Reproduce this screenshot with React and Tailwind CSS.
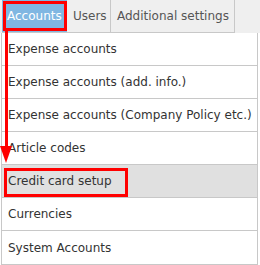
export default function App() {
  const items = [
    "Expense accounts",
    "Expense accounts (add. info.)",
    "Expense accounts (Company Policy etc.)",
    "Article codes",
    "Credit card setup",
    "Currencies",
    "System Accounts",
  ];
  return (
    <div className="relative w-[260px] h-[265px] bg-white overflow-hidden font-['DejaVu_Sans',sans-serif] text-[12px] leading-none">
      <div className="flex h-[33px] bg-[#efefef] pl-[2px]">
        <div className="w-[65px] h-[33px] bg-[#80b7e2] text-white flex items-center pl-[5px] border-b border-[#c8c8c8]">
          Accounts
        </div>
        <div className="w-[44px] h-[33px] text-[#555] flex items-center pl-[6px] border-r border-b border-[#c8c8c8]">
          Users
        </div>
        <div className="w-[124px] h-[33px] text-[#555] flex items-center pl-[6px] border-r border-b border-[#c8c8c8]">
          Additional settings
        </div>
      </div>
      <div className="ml-[1px] w-[257px] border-x border-b border-[#c8c8c8] bg-white">
        {items.map((t, i) => (
          <div
            key={t}
            className={
              "h-[33px] flex items-center pl-[6px] text-[#333] " +
              (i < items.length - 1 ? "border-b border-[#c8c8c8] " : "") +
              (t === "Credit card setup" ? "bg-[#e0e0e0]" : "bg-white")
            }
          >
            {t}
          </div>
        ))}
      </div>
      <div className="absolute left-[3px] top-[1px] w-[64px] h-[30px] border-[3px] border-[#ff0000]" />
      <div className="absolute left-[4px] top-[168px] w-[124px] h-[29px] border-[3px] border-[#ff0000]" />
      <div className="absolute left-[5px] top-[31px] w-[3px] h-[118px] bg-[#ff0000]" />
      <div className="absolute left-0 top-[146px] w-0 h-0 border-l-[6px] border-r-[6px] border-t-[17px] border-l-transparent border-r-transparent border-t-[#ff0000]" />
    </div>
  );
}
